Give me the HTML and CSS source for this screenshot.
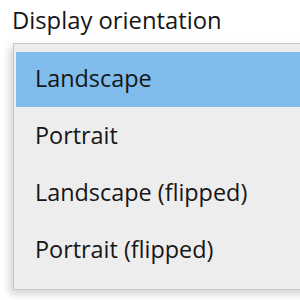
FILE: index.html
```html
<!DOCTYPE html>
<html>
<head>
<meta charset="utf-8">
<link rel="stylesheet" href="styles.css">
</head>
<body>
<div class="page">
  <div class="title">Display orientation</div>
  <div class="menu">
    <div class="item selected">Landscape</div>
    <div class="item">Portrait</div>
    <div class="item">Landscape (flipped)</div>
    <div class="item">Portrait (flipped)</div>
  </div>
</div>
</body>
</html>
```
FILE: styles.css
```css
html, body {
  margin: 0;
  padding: 0;
  background: #ffffff;
  overflow: hidden;
}
.page {
  width: 300px;
  height: 300px;
  overflow: hidden;
  font-family: "Open Sans", "Noto Sans", sans-serif;
  color: #161616;
}
.title {
  font-size: 23.8px;
  line-height: 32px;
  padding: 4px 0 0 12px;
  height: 43px;
  box-sizing: border-box;
}
.menu {
  margin: 0 0 0 13px;
  width: 320px;
  height: 247px;
  box-sizing: border-box;
  border: 1px solid #c8c8c8;
  background: #ededed;
  padding: 8px 0 0 2px;
  box-shadow: -3px 4px 8px rgba(0,0,0,0.18);
}
.item {
  height: 57px;
  line-height: 52px;
  font-size: 23.4px;
  padding-left: 19px;
  box-sizing: border-box;
}
.item.selected {
  background: #80bcec;
  height: 55px;
  margin-bottom: 2px;
}
```
